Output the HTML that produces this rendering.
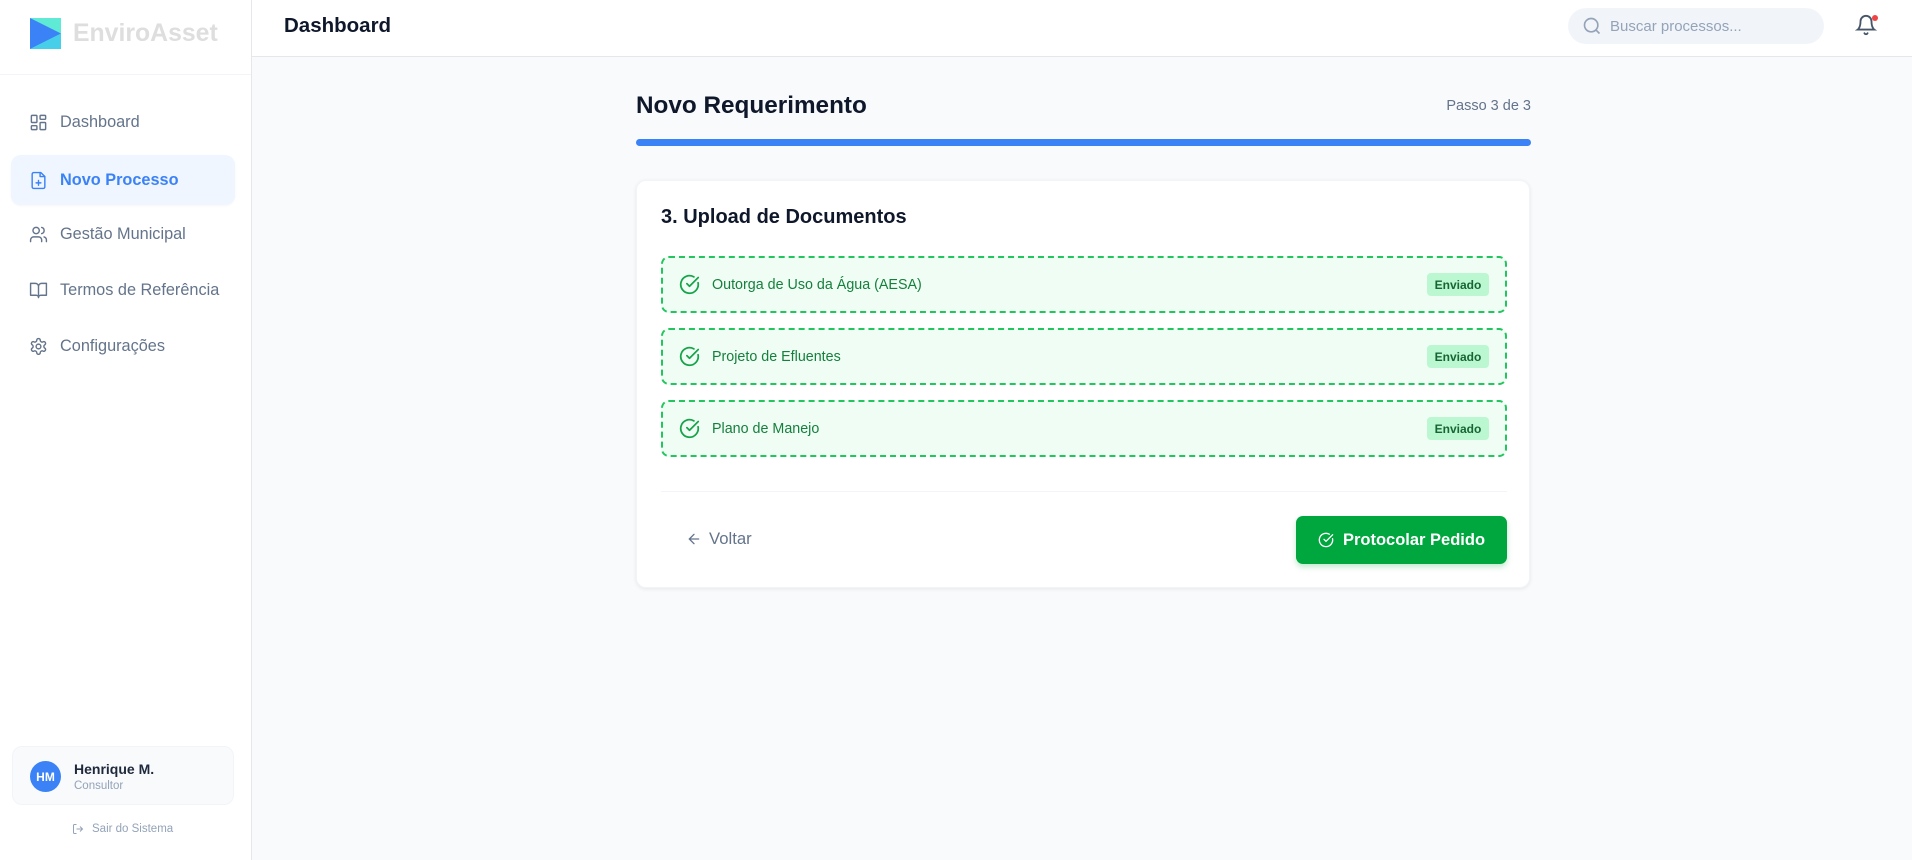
<!DOCTYPE html>
<html><head><meta charset="utf-8"><style>
*{box-sizing:border-box;margin:0;padding:0}
body{width:1912px;height:860px;overflow:hidden;background:#f8fafc;font-family:"Liberation Sans",sans-serif;position:relative}
.abs{position:absolute}
.side{left:0;top:0;width:252px;height:860px;background:#fff;border-right:1px solid #e5e7eb}
.nav{position:absolute;left:11px;width:224px;height:50px;border-radius:10px;display:flex;align-items:center;padding-left:18px;font-size:16.3px;color:#64748b}
.nav svg{width:19px;height:19px;margin-right:12px;fill:none;stroke:#64748b;stroke-width:1.8;stroke-linecap:round;stroke-linejoin:round}
.nav.act{background:#eff6ff;color:#3b82f6;font-weight:bold;box-shadow:0 1px 2px rgba(0,0,0,.04)}
.nav.act svg{stroke:#3b82f6}
.item{position:absolute;left:661px;width:846px;height:57px;border:2px dashed #22c55e;border-radius:8px;background:#f0fdf4;display:flex;align-items:center;padding-left:16px;font-size:14.3px;color:#15803d}
.item svg{width:21px;height:21px;margin-right:12px;fill:none;stroke:#16a34a;stroke-width:2;stroke-linecap:round;stroke-linejoin:round}
.badge{position:absolute;right:16px;top:15px;width:62px;height:23px;background:#bbf7d0;border-radius:4px;font-size:12px;font-weight:bold;color:#166534;display:flex;align-items:center;justify-content:center}
</style></head><body>
<div class="abs side">
 <svg class="abs" style="left:30px;top:18px" width="31" height="31" viewBox="0 0 31 31"><rect width="31" height="31" fill="#5eead4"/><polygon points="0,0 31,15.5 0,31" fill="#3b82f6"/><polygon points="0,31 31,15.5 31,31" fill="#38bdf8" opacity=".6"/></svg>
 <div class="abs" style="left:73px;top:18px;font-size:24.8px;font-weight:bold;color:#dedede;line-height:32px">EnviroAsset</div>
 <div class="abs" style="left:0;top:74px;width:251px;height:1px;background:#f1f5f9"></div>
 <div class="nav" style="top:97px"><svg viewBox="0 0 24 24"><rect x="3" y="3" width="7" height="9" rx="1"/><rect x="14" y="3" width="7" height="5" rx="1"/><rect x="14" y="12" width="7" height="9" rx="1"/><rect x="3" y="16" width="7" height="5" rx="1"/></svg>Dashboard</div>
 <div class="nav act" style="top:155px"><svg viewBox="0 0 24 24"><path d="M15 2H6a2 2 0 0 0-2 2v16a2 2 0 0 0 2 2h12a2 2 0 0 0 2-2V7z"/><path d="M14 2v5h6M12 18v-6M9 15h6"/></svg>Novo Processo</div>
 <div class="nav" style="top:209px"><svg viewBox="0 0 24 24"><path d="M16 21v-2a4 4 0 0 0-4-4H6a4 4 0 0 0-4 4v2"/><circle cx="9" cy="7" r="4"/><path d="M22 21v-2a4 4 0 0 0-3-3.9M16 3.1a4 4 0 0 1 0 7.8"/></svg>Gestão Municipal</div>
 <div class="nav" style="top:265px"><svg viewBox="0 0 24 24"><path d="M2 3h6a4 4 0 0 1 4 4v14a3 3 0 0 0-3-3H2zM22 3h-6a4 4 0 0 0-4 4v14a3 3 0 0 1 3-3h7z"/></svg>Termos de Referência</div>
 <div class="nav" style="top:321px"><svg viewBox="0 0 24 24"><circle cx="12" cy="12" r="3"/><path d="M12.2 2h-.4a2 2 0 0 0-2 2v.2a2 2 0 0 1-1 1.7l-.4.3a2 2 0 0 1-2 0l-.2-.1a2 2 0 0 0-2.7.7l-.2.4a2 2 0 0 0 .7 2.7l.2.1a2 2 0 0 1 1 1.7v.5a2 2 0 0 1-1 1.7l-.2.1a2 2 0 0 0-.7 2.7l.2.4a2 2 0 0 0 2.7.7l.2-.1a2 2 0 0 1 2 0l.4.3a2 2 0 0 1 1 1.7v.2a2 2 0 0 0 2 2h.4a2 2 0 0 0 2-2v-.2a2 2 0 0 1 1-1.7l.4-.3a2 2 0 0 1 2 0l.2.1a2 2 0 0 0 2.7-.7l.2-.4a2 2 0 0 0-.7-2.7l-.2-.1a2 2 0 0 1-1-1.7v-.5a2 2 0 0 1 1-1.7l.2-.1a2 2 0 0 0 .7-2.7l-.2-.4a2 2 0 0 0-2.7-.7l-.2.1a2 2 0 0 1-2 0l-.4-.3a2 2 0 0 1-1-1.7V4a2 2 0 0 0-2-2z"/></svg>Configurações</div>
 <div class="abs" style="left:12px;top:746px;width:222px;height:59px;border:1px solid #f1f5f9;background:#f8fafc;border-radius:10px">
  <div class="abs" style="left:17px;top:14px;width:31px;height:31px;border-radius:50%;background:#3b82f6;color:#fff;font-size:12px;font-weight:bold;display:flex;align-items:center;justify-content:center">HM</div>
  <div class="abs" style="left:61px;top:14px;font-size:14px;font-weight:bold;color:#1e293b">Henrique M.</div>
  <div class="abs" style="left:61px;top:33px;font-size:11.5px;color:#94a3b8">Consultor</div>
 </div>
 <div class="abs" style="left:72px;top:823px;font-size:11.5px;color:#94a3b8;display:flex;align-items:center"><svg width="12" height="12" viewBox="0 0 24 24" fill="none" stroke="#94a3b8" stroke-width="2" style="margin-right:8px"><path d="M9 21H5a2 2 0 0 1-2-2V5a2 2 0 0 1 2-2h4M16 17l5-5-5-5M21 12H9"/></svg>Sair do Sistema</div>
</div>
<div class="abs" style="left:252px;top:0;width:1660px;height:57px;background:#fff;border-bottom:1px solid #e5e7eb"></div>
<div class="abs" style="left:284px;top:14px;font-size:20.5px;font-weight:bold;color:#0f172a">Dashboard</div>
<div class="abs" style="left:1568px;top:8px;width:256px;height:36px;border-radius:18px;background:#f1f5f9;display:flex;align-items:center;padding-left:14px;font-size:15px;color:#94a3b8"><svg width="20" height="20" viewBox="0 0 24 24" fill="none" stroke="#94a3b8" stroke-width="2" style="margin-right:8px"><circle cx="11" cy="11" r="8"/><path d="M21 21l-4.3-4.3"/></svg>Buscar processos...</div>
<svg class="abs" style="left:1855px;top:14px" width="22" height="22" viewBox="0 0 24 24" fill="none" stroke="#475569" stroke-width="2" stroke-linecap="round"><path d="M6 8a6 6 0 0 1 12 0c0 7 3 9 3 9H3s3-2 3-9M10.3 21a1.9 1.9 0 0 0 3.4 0"/></svg>
<div class="abs" style="left:1872px;top:15px;width:6px;height:6px;border-radius:50%;background:#ef4444"></div>

<div class="abs" style="left:636px;top:92px;font-size:24.3px;font-weight:bold;color:#0f172a">Novo Requerimento</div>
<div class="abs" style="left:1431px;top:98px;width:100px;text-align:right;font-size:14.5px;color:#64748b">Passo 3 de 3</div>
<div class="abs" style="left:636px;top:139px;width:895px;height:7px;border-radius:4px;background:#3b82f6"></div>

<div class="abs" style="left:636px;top:180px;width:894px;height:408px;background:#fff;border-radius:10px;box-shadow:0 1px 4px rgba(0,0,0,.08);border:1px solid #f1f5f9"></div>
<div class="abs" style="left:661px;top:206px;font-size:20px;font-weight:bold;color:#0f172a">3. Upload de Documentos</div>
<div class="item" style="top:256px"><svg viewBox="0 0 24 24"><path d="M21.8 10A10 10 0 1 1 17 3.3"/><path d="M9 11l3 3L22 4"/></svg>Outorga de Uso da Água (AESA)<div class="badge">Enviado</div></div>
<div class="item" style="top:328px"><svg viewBox="0 0 24 24"><path d="M21.8 10A10 10 0 1 1 17 3.3"/><path d="M9 11l3 3L22 4"/></svg>Projeto de Efluentes<div class="badge">Enviado</div></div>
<div class="item" style="top:400px"><svg viewBox="0 0 24 24"><path d="M21.8 10A10 10 0 1 1 17 3.3"/><path d="M9 11l3 3L22 4"/></svg>Plano de Manejo<div class="badge">Enviado</div></div>
<div class="abs" style="left:661px;top:491px;width:846px;height:1px;background:#f1f5f9"></div>
<div class="abs" style="left:686px;top:529px;font-size:16.7px;color:#64748b;display:flex;align-items:center"><svg width="16" height="16" viewBox="0 0 24 24" fill="none" stroke="#64748b" stroke-width="2" stroke-linecap="round" style="margin-right:7px"><path d="M19 12H5M12 19l-7-7 7-7"/></svg>Voltar</div>
<div class="abs" style="left:1296px;top:516px;width:211px;height:48px;border-radius:7px;background:#00a63e;box-shadow:0 3px 6px rgba(0,166,62,.25);color:#fff;font-size:16.5px;font-weight:bold;display:flex;align-items:center;justify-content:center"><svg width="16" height="16" viewBox="0 0 24 24" fill="none" stroke="#fff" stroke-width="2" stroke-linecap="round" style="margin-right:9px"><path d="M21.8 10A10 10 0 1 1 17 3.3"/><path d="M9 11l3 3L22 4"/></svg>Protocolar Pedido</div>
</body></html>
